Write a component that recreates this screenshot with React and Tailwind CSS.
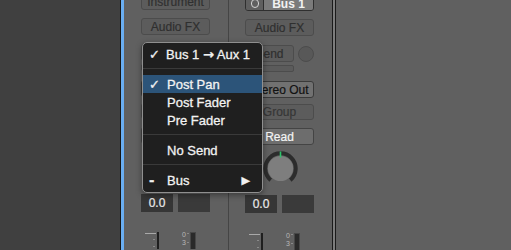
import React from "react";

const font = { fontFamily: '"Liberation Sans", Arial, sans-serif' };

function Knob() {
  const cx = 17.5, cy = 17.5, r = 15.2;
  const a1 = (130 * Math.PI) / 180;
  const a2 = (50 * Math.PI) / 180;
  const x1 = cx + r * Math.cos(a1), y1 = cy + r * Math.sin(a1);
  const x2 = cx + r * Math.cos(a2), y2 = cy + r * Math.sin(a2);
  return (
    <svg width="35" height="35" viewBox="0 0 35 35">
      <path d={`M ${x1} ${y1} A ${r} ${r} 0 1 1 ${x2} ${y2}`} fill="none" stroke="#2c2c2c" strokeWidth="4" />
      <circle cx={cx} cy={cy} r="12.6" fill="#7e7e7e" />
      <line x1="17.5" y1="0.5" x2="17.5" y2="6.5" stroke="#2fc36b" strokeWidth="1.6" />
    </svg>
  );
}

function Meter() {
  return (
    <svg width="69" height="20" viewBox="0 0 69 20">
      <line x1="4" y1="4.5" x2="15" y2="4.5" stroke="#a9a9a9" strokeWidth="1" />
      <line x1="12" y1="10.5" x2="14" y2="10.5" stroke="#8a8a8a" strokeWidth="1" />
      <line x1="12" y1="17.5" x2="14" y2="17.5" stroke="#8a8a8a" strokeWidth="1" />
      <rect x="16" y="3" width="2" height="17" fill="#1f1f1f" />
      <text x="41" y="8" fontSize="7" fill="#b8b8b8" fontFamily="Liberation Sans, Arial, sans-serif">0</text>
      <text x="41" y="15.5" fontSize="7" fill="#b8b8b8" fontFamily="Liberation Sans, Arial, sans-serif">3</text>
      <line x1="46" y1="4.5" x2="48" y2="4.5" stroke="#8a8a8a" strokeWidth="1" />
      <line x1="46" y1="13.5" x2="48" y2="13.5" stroke="#8a8a8a" strokeWidth="1" />
      <rect x="49.5" y="3.5" width="5" height="17" fill="#2a2a2a" stroke="#474747" strokeWidth="1" />
    </svg>
  );
}

function Btn({ children, className = "" }) {
  return (
    <div
      className={`flex items-center justify-center rounded-[3px] border text-[12px] leading-none [-webkit-text-stroke:0.2px] ${className}`}
    >
      {children}
    </div>
  );
}

function Channel({ top, first }) {
  return (
    <div
      className={`flex w-[104px] shrink-0 flex-col bg-[#606060] ${first ? "pl-[17px]" : "border-l border-[#454545] pl-[16px]"}`}
    >
      <div className="w-[69px] flex flex-col">
        {top === "instrument" ? (
          <Btn className="mt-[-8px] h-[18px] w-[69px] border-[#4a4a4a] bg-[#5c5c5c] text-[#303030]">
            <span className="pt-[2px]">Instrument</span>
          </Btn>
        ) : (
          <div className="mt-[-8px] flex h-[19px] w-[69px] overflow-hidden rounded-[3px] border border-[#2f2f2f]">
            <div className="flex w-[17px] items-center justify-center bg-[#5f5f5f]">
              <div className="h-[9px] w-[8px] rounded-full border-[1.5px] border-[#d2d2d2] mt-[4px]" />
            </div>
            <div className="w-px bg-[#2f2f2f]" />
            <div className="flex flex-1 items-center justify-center bg-[#7b7b7b] text-[12px] font-bold text-[#f2f2f2]">
              <span className="pt-[4px]">Bus 1</span>
            </div>
          </div>
        )}
        <Btn className="mt-[8px] h-[17px] w-[69px] border-[#4c4c4c] bg-[#5c5c5c] text-[#2f2f2f]">
          Audio FX
        </Btn>
        <div className="mt-[9px] flex h-[17px] items-center justify-between">
          <Btn className="h-[17px] w-[49px] border-[#4c4c4c] bg-[#5c5c5c] text-[#2f2f2f]">Send</Btn>
          <div className="h-[16px] w-[16px] rounded-full border border-[#4c4c4c] bg-[#585858]" />
        </div>
        <div className="mt-[3px] h-[7px] w-[49px] rounded-[2px] border border-[#4c4c4c] bg-[#5b5b5b]" />
        <Btn className="mt-[9px] h-[17px] w-[69px] border-[#3a3a3a] bg-[#717171] text-[#111111]">
          Stereo Out
        </Btn>
        <Btn className="mt-[6px] h-[16px] w-[69px] border-[#4c4c4c] bg-[#5c5c5c] text-[#363636]">
          Group
        </Btn>
        <Btn className="mt-[8px] h-[17px] w-[69px] border-[#444444] bg-[#6d6d6d] text-[#f4f4f4]">
          Read
        </Btn>
        <div className="mt-[6px] flex h-[35px] justify-center pl-[1px]">
          <Knob />
        </div>
        <div className="mt-[9px] flex h-[18px] justify-between">
          <div className="flex w-[32px] items-center justify-center bg-[#363636] text-[12px] text-[#ececec] [-webkit-text-stroke:0.2px]">
            0.0
          </div>
          <div className="w-[32px] bg-[#3a3a3a]" />
        </div>
        <div className="mt-[17px]">
          <Meter />
        </div>
      </div>
    </div>
  );
}

function MenuItem({ check, label, highlight, arrow }) {
  return (
    <div
      className={`flex h-[18px] items-center pl-[6px] pr-[12px] pt-[2px] text-[13px] text-[#f2f2f2] [-webkit-text-stroke:0.3px] ${highlight ? "bg-[#2c5479]" : ""}`}
    >
      <span
        className="w-[18px] text-[13px] font-bold"
        style={{ fontFamily: '"DejaVu Sans", sans-serif' }}
      >
        {check}
      </span>
      <span className="flex-1 whitespace-nowrap">{label}</span>
      {arrow && (
        <span className="text-[11px]" style={{ fontFamily: '"DejaVu Sans", sans-serif' }}>
          ▶
        </span>
      )}
    </div>
  );
}

function Sep() {
  return <div className="mt-[5px] mb-[6px] h-px bg-[#3a3a3a]" />;
}

export default function App() {
  return (
    <div className="relative flex h-[250px] w-[511px] overflow-hidden bg-[#606060]" style={font}>
      <div className="w-[120px] shrink-0 bg-[#404040]" />
      <div className="w-px shrink-0 bg-[#151515]" />
      <div className="w-[3px] shrink-0 bg-[#6aaef2]" />
      <Channel top="instrument" first />
      <Channel top="bus" />
      <div className="w-px shrink-0 bg-[#1a1a1a]" />
      <div className="w-[2px] shrink-0 bg-[#7c7c7c]" />
      <div className="w-px shrink-0 bg-[#1a1a1a]" />
      <div className="flex-1 bg-[#606060]" />

      <div className="absolute left-[142px] top-[42px] h-[151px] w-[121px] rounded-[5px] border border-[#8f8f8f] bg-[#1f1f1f] pt-[2px] shadow-[0_2px_6px_rgba(0,0,0,0.4)]">
        <MenuItem
          check="✓"
          label={
            <>
              Bus 1{" "}
              <span className="font-bold" style={{ fontFamily: '"DejaVu Sans", sans-serif' }}>
                →
              </span>{" "}
              Aux 1
            </>
          }
        />
        <Sep />
        <MenuItem check="✓" label="Post Pan" highlight />
        <MenuItem label="Post Fader" />
        <MenuItem label="Pre Fader" />
        <Sep />
        <MenuItem label="No Send" />
        <Sep />
        <MenuItem check="-" label="Bus" arrow />
      </div>
    </div>
  );
}
